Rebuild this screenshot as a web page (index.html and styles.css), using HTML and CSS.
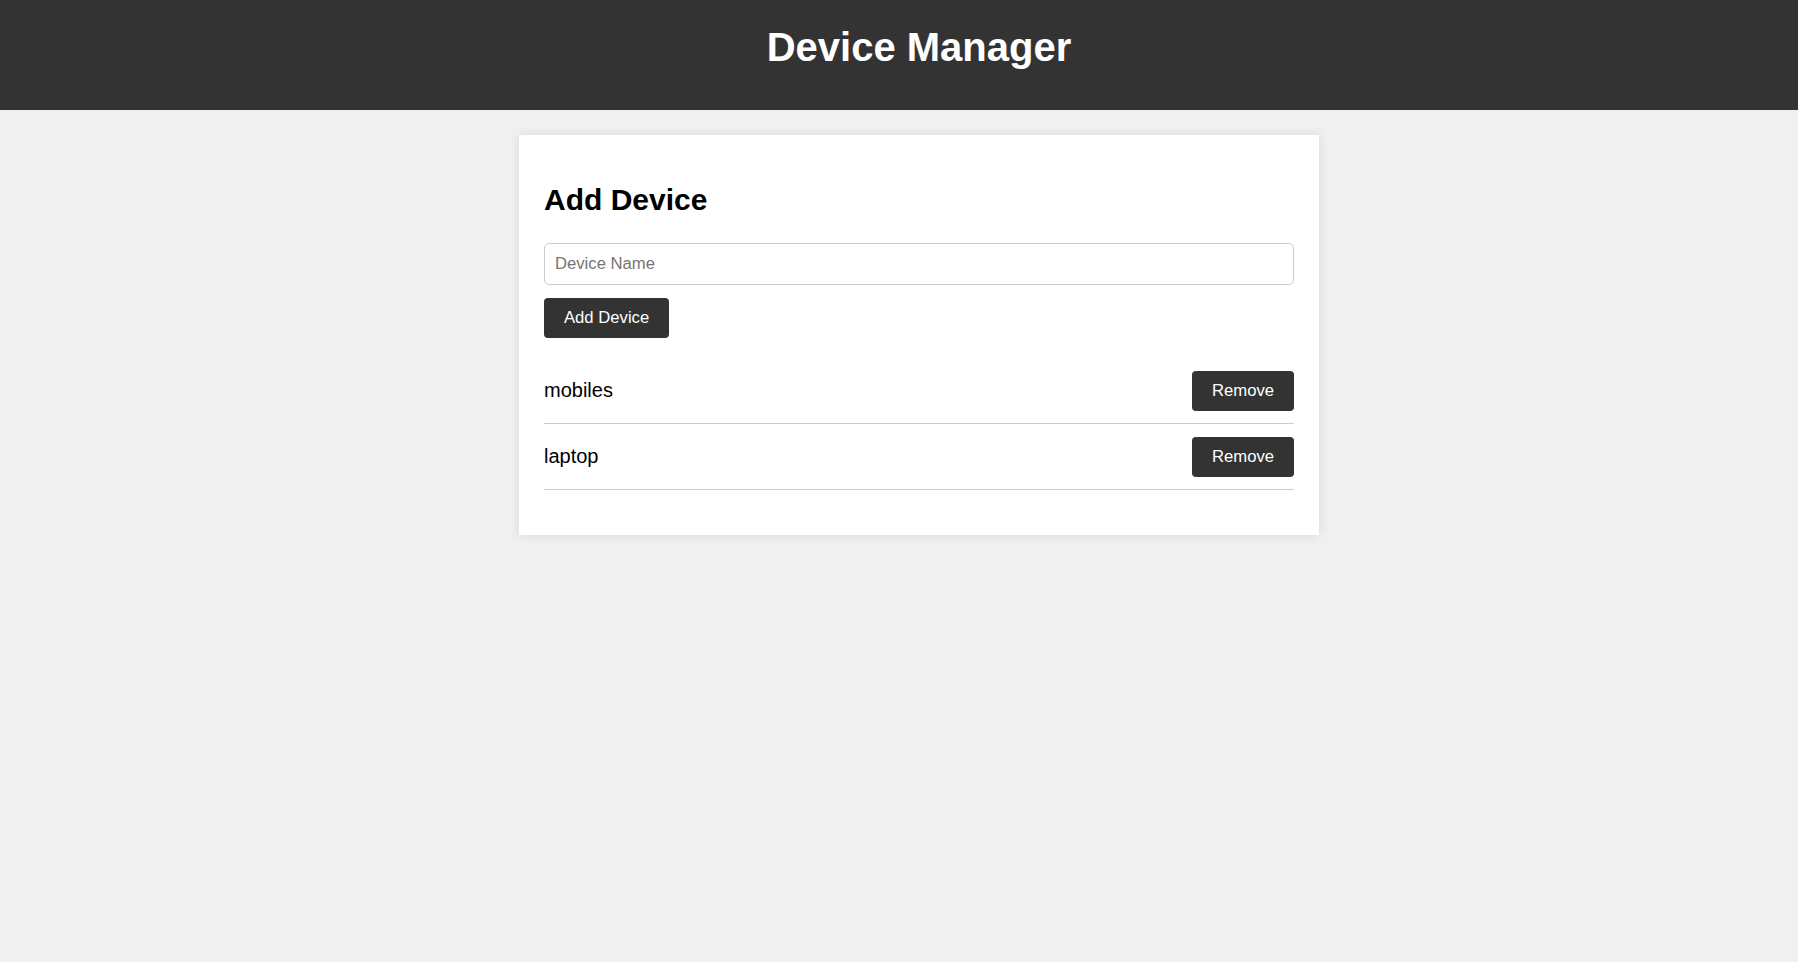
FILE: index.html
```html
<!DOCTYPE html>
<html lang="en">
<head>
<meta charset="utf-8">
<title>Device Manager</title>
<link rel="stylesheet" href="styles.css">
</head>
<body>
<header class="top-bar">
  <h1 class="top-title">Device Manager</h1>
</header>
<main class="page">
  <section class="card">
    <h2 class="card-title">Add Device</h2>
    <form class="add-form">
      <input class="device-input" type="text" placeholder="Device Name">
      <button class="btn" type="button">Add Device</button>
    </form>
    <ul class="device-list">
      <li class="device-row"><span class="device-name">mobiles</span><button class="btn" type="button">Remove</button></li>
      <li class="device-row"><span class="device-name">laptop</span><button class="btn" type="button">Remove</button></li>
    </ul>
  </section>
</main>
</body>
</html>
```
FILE: styles.css
```css
html {
  overflow-x: hidden;
}
body {
  margin: 0;
  background: #f0f0f0;
  font-family: "Liberation Sans", Arial, sans-serif;
  color: #000;
}
.top-bar {
  width: 100%;
  padding: 25px 20px 40px;
  background: #333;
  color: #fff;
  text-align: center;
}
.top-title {
  margin: 0;
  font-size: 40px;
  font-weight: bold;
}
.page {
  width: 100%;
  padding: 25px 20px;
}
.card {
  max-width: 750px;
  margin: 0 auto;
  padding: 25px;
  background: #fff;
  box-shadow: 0 0 10px rgba(0, 0, 0, 0.1);
}
.card-title {
  margin: 23px 0 26px;
  font-size: 30px;
  font-weight: bold;
}
.add-form {
  margin: 0;
}
.device-input {
  display: block;
  width: 100%;
  box-sizing: border-box;
  padding: 10px;
  margin: 0 0 13px;
  border: 1px solid #ccc;
  border-radius: 5px;
  font-family: "Liberation Sans", Arial, sans-serif;
  font-size: 16.67px;
  color: #000;
}
.device-input::placeholder {
  color: #757575;
}
.btn {
  display: block;
  padding: 10px 20px;
  border: none;
  border-radius: 4px;
  background: #333;
  color: #fff;
  font-family: "Liberation Sans", Arial, sans-serif;
  font-size: 16.67px;
  cursor: pointer;
}
.device-list {
  list-style: none;
  margin: 20px 0;
  padding: 0;
}
.device-row {
  display: flex;
  justify-content: space-between;
  align-items: center;
  padding: 12.5px 0;
  border-bottom: 1px solid #ccc;
  font-size: 20px;
}
```
